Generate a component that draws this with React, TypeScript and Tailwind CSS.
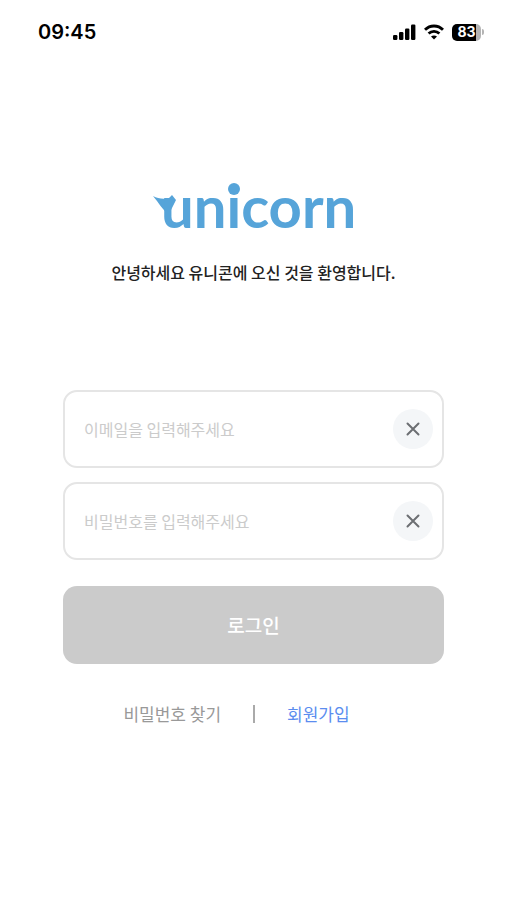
import React, { useState } from "react";

type FieldProps = {
  type: string;
  label: string;
  value: string;
  onChange: (value: string) => void;
};

const StatusBar = () => {
  return (
    <header className="flex items-center justify-between pt-5 pr-[23px] pl-[38px]">
      <span className="font-['Inter',sans-serif] text-[20px] leading-6 font-semibold text-black">
        09:45
      </span>
      <div className="flex items-center gap-2">
        <svg width="23" height="16" viewBox="0 0 23 16" aria-hidden="true">
          <rect x="0" y="11" width="4.4" height="5" rx="1.2" />
          <rect x="6" y="8" width="4.4" height="8" rx="1.2" />
          <rect x="12" y="4.5" width="4.4" height="11.5" rx="1.2" />
          <rect x="18" y="0.5" width="4.4" height="15.5" rx="1.2" />
        </svg>
        <svg
          width="20"
          height="16"
          viewBox="0 0 20 16"
          fill="none"
          stroke="#000"
          strokeWidth="2.8"
          aria-hidden="true"
        >
          <path d="M1 5.8C6 .7 14 .7 19 5.8" />
          <path d="M4.6 9.6C7.6 6.7 12.4 6.7 15.4 9.6" />
          <path
            d="M10 15.6 7 12.5C8.7 11 11.3 11 13 12.5Z"
            fill="#000"
            stroke="none"
          />
        </svg>
        <div className="flex items-center gap-px">
          <div className="flex h-[17px] w-[29px] items-center justify-center rounded-[5px] bg-linear-to-r from-black from-83% to-[#b4b4b4] to-83% font-['Inter',sans-serif] text-[14px] leading-4 font-bold text-white">
            83
          </div>
          <span className="h-1.5 w-0.5 rounded-r-full bg-[#b4b4b4]" />
        </div>
      </div>
    </header>
  );
};

const Logo = () => {
  return (
    <svg
      width="204"
      height="48"
      viewBox="0 0 204 48"
      fill="#56a4d9"
      className="overflow-visible"
      role="img"
      aria-label="unicorn"
    >
      {/* horn on the first letter */}
      <path d="M1 13C6 15.5 11 16.5 17 15L20 12 24 17 17 31C11 28 7 20 1 13Z" />
      <text
        x="9"
        y="45"
        className="font-['Lato',sans-serif] text-[58px] leading-none font-bold"
      >
        unicorn
      </text>
      <circle cx="82" cy="6" r="6" />
    </svg>
  );
};

const Field = ({ type, label, value, onChange }: FieldProps) => {
  return (
    <div className="flex h-[78px] items-center rounded-[14px] border-2 border-[#e5e5e5] bg-white pr-[9px] pl-[19px]">
      <input
        type={type}
        aria-label={label}
        value={value}
        placeholder={label}
        onChange={(e) => onChange(e.target.value)}
        className="min-w-0 flex-1 text-[16px] leading-6 text-[#333] outline-none placeholder:text-[#cbcbcb]"
      />
      <button
        type="button"
        aria-label={`${label} 지우기`}
        onClick={() => onChange("")}
        className="flex size-10 items-center justify-center rounded-full bg-[#f4f6f8]"
      >
        <svg
          width="14"
          height="14"
          viewBox="0 0 14 14"
          stroke="#6c6f73"
          strokeWidth="2"
          strokeLinecap="round"
        >
          <path d="M1.5 1.5 12.5 12.5M12.5 1.5 1.5 12.5" />
        </svg>
      </button>
    </div>
  );
};

const App = () => {
  const [email, setEmail] = useState("");
  const [password, setPassword] = useState("");

  return (
    <div className="min-h-screen bg-white font-['Noto_Sans_CJK_KR',sans-serif]">
      <StatusBar />
      <main className="px-[63px] pt-[139px]">
        <div className="flex flex-col items-center">
          <Logo />
          <h1 className="mt-[29px] text-[16px] leading-6 font-medium text-[#222]">
            안녕하세요 유니콘에 오신 것을 환영합니다.
          </h1>
        </div>
        <form
          className="mt-[106px] flex flex-col gap-[14px]"
          onSubmit={(e) => e.preventDefault()}
        >
          <Field
            type="email"
            label="이메일을 입력해주세요"
            value={email}
            onChange={setEmail}
          />
          <Field
            type="password"
            label="비밀번호를 입력해주세요"
            value={password}
            onChange={setPassword}
          />
          <button
            type="submit"
            className="mt-3 h-[78px] rounded-[14px] bg-[#cbcbcb] text-[19px] font-medium text-white"
          >
            로그인
          </button>
        </form>
        <nav className="mt-[38px] flex items-center justify-center gap-8 pr-[34px] text-[17px] leading-6">
          <a href="#find-password" className="text-[#999]">
            비밀번호 찾기
          </a>
          <span className="h-[18px] w-0.5 bg-[#aaa]" />
          <a href="#sign-up" className="text-[#5b8def]">
            회원가입
          </a>
        </nav>
      </main>
    </div>
  );
};

export default App;
